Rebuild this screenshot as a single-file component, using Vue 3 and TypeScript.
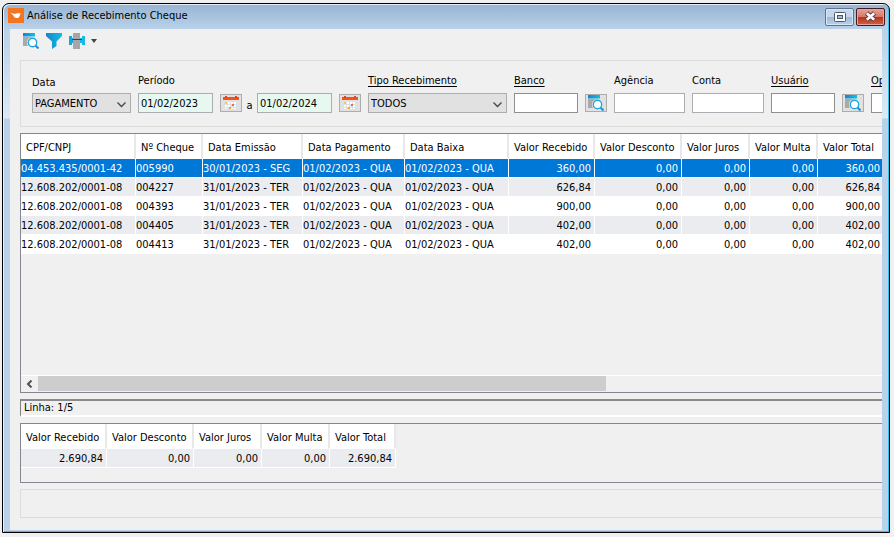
<script setup lang="ts">
import { ref } from 'vue'

interface Column {
  label: string
  width: number
  numeric?: boolean
}

const valueColumns: Column[] = [
  { label: 'Valor Recebido', width: 86, numeric: true },
  { label: 'Valor Desconto', width: 87, numeric: true },
  { label: 'Valor Juros', width: 68, numeric: true },
  { label: 'Valor Multa', width: 68, numeric: true },
  { label: 'Valor Total', width: 66, numeric: true },
]

const columns: Column[] = [
  { label: 'CPF/CNPJ', width: 115 },
  { label: 'Nº Cheque', width: 67 },
  { label: 'Data Emissão', width: 100 },
  { label: 'Data Pagamento', width: 102 },
  { label: 'Data Baixa', width: 104 },
  ...valueColumns,
]

const paid = '01/02/2023 - QUA'
const rows: string[][] = [
  ['04.453.435/0001-42', '005990', '30/01/2023 - SEG', paid, paid, '360,00', '0,00', '0,00', '0,00', '360,00'],
  ['12.608.202/0001-08', '004227', '31/01/2023 - TER', paid, paid, '626,84', '0,00', '0,00', '0,00', '626,84'],
  ['12.608.202/0001-08', '004393', '31/01/2023 - TER', paid, paid, '900,00', '0,00', '0,00', '0,00', '900,00'],
  ['12.608.202/0001-08', '004405', '31/01/2023 - TER', paid, paid, '402,00', '0,00', '0,00', '0,00', '402,00'],
  ['12.608.202/0001-08', '004413', '31/01/2023 - TER', paid, paid, '402,00', '0,00', '0,00', '0,00', '402,00'],
]
const totals = ['2.690,84', '0,00', '0,00', '0,00', '2.690,84']

const selected = ref(0)
const dateKind = ref('PAGAMENTO')
const receiptKind = ref('TODOS')
const from = ref('01/02/2023')
const to = ref('01/02/2024')
const bank = ref('')
const agency = ref('')
const account = ref('')
const user = ref('')
const operator = ref('')
</script>

<template>
  <div class="desktop">
    <svg class="defs" width="0" height="0" aria-hidden="true">
      <defs>
        <linearGradient id="cyan" x1="0" x2="1" y1="0" y2="0">
          <stop offset="0" stop-color="#1783cf" />
          <stop offset="1" stop-color="#12bfe2" />
        </linearGradient>
        <symbol id="search" viewBox="0 0 16 16">
          <path d="M0 4h10v9H0z" fill="#a9a9a9" />
          <path d="M0 0h12v3.500H0z" fill="url(#cyan)" />
          <circle cx="9.5" cy="9.5" r="5.6" fill="#f0f0f0" />
          <circle cx="9.5" cy="9.5" r="4.2" fill="#fff" stroke="#1ba5dc" stroke-width="1.4" />
          <path d="M12.700 12.700l2.800 2.800" stroke="#1593d6" stroke-width="2" />
        </symbol>
        <symbol id="calendar" viewBox="0 0 16 15">
          <path d="M0 1h16v13H0z" fill="#dde1e6" />
          <path d="M0 1h16v3H0z" fill="#fc4f16" />
          <path d="M2 0h2v2H2zM12 0h2v2h-2z" fill="#c94d29" />
          <path d="M5 6h2v2H5zM8 6h2v2H8zM11 6h2v2h-2zM2 9h2v2H2zM5 9h2v2H5zM11 9h2v2h-2zM2 12h2v1H2zM8 12h2v1H8zM11 12h2v1h-2z" fill="#fff" />
          <path d="M2 6h2v2H2z" fill="#f5cf3a" />
          <path d="M9 8h2v2H9z" fill="#f36b3c" />
          <path d="M6 11h2v2H6z" fill="#f5a03a" />
        </symbol>
      </defs>
    </svg>

    <main class="window">
      <header class="titlebar">
        <svg class="app-icon" width="16" height="15" viewBox="0 0 16 15" aria-hidden="true">
          <path d="M0 0h16v15H0z" fill="#f4741f" />
          <path d="M2.500 4.800l4 1.200c1.800-1 4-1 6.500-.4-.7.400-1 .9-1.200 1.800-.5 2-1.500 2.700-3 2.700-2.300 0-3-1.400-3.600-2.800z" fill="#fff" />
        </svg>
        <h1>Análise de Recebimento Cheque</h1>
        <button class="caption" type="button" aria-label="Restaurar">
          <svg width="12" height="10" viewBox="0 0 12 10" aria-hidden="true">
            <rect x=".5" y=".5" width="11" height="9" rx="1" fill="#fff" stroke="#4c5969" />
            <rect x="3.500" y="3.500" width="5" height="3" fill="#9dbce0" stroke="#4c5969" />
          </svg>
        </button>
        <button class="caption close" type="button" aria-label="Fechar">
          <svg width="13" height="11" viewBox="0 0 13 11" aria-hidden="true">
            <path d="M2.500 2l8 7M10.500 2l-8 7" stroke="#5b3b42" stroke-width="4.500" />
            <path d="M2.800 2.200l7.400 6.600M10.200 2.200l-7.400 6.600" stroke="#fff" stroke-width="2.600" />
          </svg>
        </button>
      </header>

      <div class="client">
        <div class="toolbar">
          <button type="button" aria-label="Pesquisar">
            <svg width="16" height="16"><use href="#search" /></svg>
          </button>
          <button type="button" aria-label="Filtrar">
            <svg width="16" height="16" viewBox="0 0 16 16" aria-hidden="true">
              <path d="M0 0h16v3l-5.500 5.500V13L6 16V8.500L0 3z" fill="url(#cyan)" />
            </svg>
          </button>
          <button class="print" type="button" aria-label="Imprimir">
            <svg width="16" height="16" viewBox="0 0 16 16" aria-hidden="true">
              <path d="M4 0h7v16H4z" fill="#a6a6a6" />
              <path d="M0 3h3v2h1v5H3v2H0z" fill="#18a5dc" />
              <path d="M16 3h-3v2h-2v5h2v2h3z" fill="#18b9e4" />
              <path d="M3 6.500h10" stroke="#35434d" />
            </svg>
            <svg width="6" height="4" viewBox="0 0 6 4" aria-hidden="true">
              <path d="M0 0h6L3 4z" fill="#444" />
            </svg>
          </button>
        </div>

        <form class="filters" @submit.prevent>
          <div class="field kind">
            <label for="kind">Data</label>
            <span class="select">
              <select id="kind" v-model="dateKind"><option>PAGAMENTO</option></select>
              <svg width="9" height="6" viewBox="0 0 9 6" aria-hidden="true"><path d="M.5 .5l4 4 4-4" /></svg>
            </span>
          </div>
          <div class="field">
            <label for="from">Período</label>
            <div class="range">
              <input id="from" v-model="from" class="date" type="text" />
              <button type="button" aria-label="Data inicial"><svg width="16" height="15"><use href="#calendar" /></svg></button>
              <label class="until" for="to">a</label>
              <input id="to" v-model="to" class="date" type="text" />
              <button type="button" aria-label="Data final"><svg width="16" height="15"><use href="#calendar" /></svg></button>
            </div>
          </div>
          <div class="field receipt">
            <label class="link" for="receipt">Tipo Recebimento</label>
            <span class="select">
              <select id="receipt" v-model="receiptKind"><option>TODOS</option></select>
              <svg width="9" height="6" viewBox="0 0 9 6" aria-hidden="true"><path d="M.5 .5l4 4 4-4" /></svg>
            </span>
          </div>
          <div class="field code">
            <label class="link" for="bank">Banco</label>
            <input id="bank" v-model="bank" class="dark" type="text" />
          </div>
          <button type="button" aria-label="Pesquisar banco"><svg width="16" height="16"><use href="#search" /></svg></button>
          <div class="field agency">
            <label for="agency">Agência</label>
            <input id="agency" v-model="agency" type="text" />
          </div>
          <div class="field account">
            <label for="account">Conta</label>
            <input id="account" v-model="account" type="text" />
          </div>
          <div class="field code">
            <label class="link" for="user">Usuário</label>
            <input id="user" v-model="user" class="dark" type="text" />
          </div>
          <button type="button" aria-label="Pesquisar usuário"><svg width="16" height="16"><use href="#search" /></svg></button>
          <div class="field code">
            <label class="link" for="operator">Operador</label>
            <input id="operator" v-model="operator" class="dark" type="text" />
          </div>
        </form>

        <section class="panel grid">
          <div class="view">
            <table>
              <colgroup><col v-for="c in columns" :key="c.label" :style="{ width: c.width + 'px' }" /></colgroup>
              <thead>
                <tr><th v-for="c in columns" :key="c.label" scope="col">{{ c.label }}</th></tr>
              </thead>
              <tbody>
                <tr v-for="(row, r) in rows" :key="r" :class="{ selected: r === selected }" @click="selected = r">
                  <td v-for="(cell, i) in row" :key="i" :class="{ numeric: columns[i].numeric }">{{ cell }}</td>
                </tr>
              </tbody>
            </table>
          </div>
          <div class="scrollbar">
            <button type="button" aria-label="Rolar para a esquerda">
              <svg width="7" height="8" viewBox="0 0 7 8" aria-hidden="true"><path d="M5.500 .5L2 4l3.500 3.500" fill="none" stroke="#505050" stroke-width="2" /></svg>
            </button>
            <div class="thumb"></div>
          </div>
        </section>

        <p class="status">Linha: {{ selected + 1 }}/{{ rows.length }}</p>

        <section class="panel totals">
          <table>
            <colgroup><col v-for="c in valueColumns" :key="c.label" :style="{ width: c.width + 'px' }" /></colgroup>
            <thead>
              <tr><th v-for="c in valueColumns" :key="c.label" scope="col">{{ c.label }}</th></tr>
            </thead>
            <tbody>
              <tr class="shaded"><td v-for="(t, i) in totals" :key="i" class="numeric">{{ t }}</td></tr>
            </tbody>
          </table>
        </section>

        <footer class="footer"></footer>
      </div>
    </main>
  </div>
</template>

<style>
body {
  background: #f0f0f0;
}
</style>

<style scoped>
* {
  box-sizing: border-box;
}

.desktop {
  display: flex;
  min-height: 100vh;
  padding: 3px 4px 4px 2px;
  font-family: "DejaVu Sans Condensed", "Noto Sans", sans-serif;
  font-size: 11px;
  line-height: 14px;
  color: #000;
}

.defs {
  position: absolute;
}

.window {
  flex: 1;
  min-width: 0;
  display: flex;
  flex-direction: column;
  padding: 0 7px 2px;
  border: 1px solid #000;
  border-radius: 7px 7px 0 0;
  background: linear-gradient(#98b4d2 0, #b9d1ea 25px, #dce9f6 114px, #b9d1ea 115px);
  box-shadow: inset 1px 1px #e6f0fa, inset -1px -1px #35c5ea;
}

.titlebar {
  display: flex;
  align-items: center;
  height: 25px;
  margin: 0 -3px 0 -2px;
}

.app-icon {
  margin: 0 3px 2px 0;
}

h1 {
  flex: 1;
  margin: 0;
  padding-bottom: 2px;
  font-size: 11px;
  font-weight: 400;
  white-space: nowrap;
}

button {
  display: flex;
  align-items: center;
  justify-content: center;
  flex: none;
  padding: 0;
  border: 0;
  background: none;
}

.caption {
  width: 29px;
  height: 18px;
  margin-left: 2px;
  border: 1px solid #5f7491;
  border-radius: 2px;
  background: linear-gradient(#c4d7ec 0 48%, #9db8d6 50%, #b8d2ec);
  box-shadow: inset 0 0 0 1px #d9e7f5;
}

.close {
  border-color: #431b25;
  background: linear-gradient(#e5a398, #d67a69 48%, #b8311a 50%, #cf6246);
  box-shadow: inset 0 0 0 1px #e6a59a;
}

.client {
  flex: 1;
  display: flex;
  flex-direction: column;
  gap: 6px;
  min-width: 0;
  padding: 0 0 12px 10px;
  overflow: hidden;
  background: #f0f0f0;
}

.toolbar {
  display: flex;
  align-items: center;
  gap: 7px;
  height: 25px;
  padding: 0 3px 2px;
}

.print {
  gap: 6px;
}

.filters {
  display: flex;
  align-items: flex-end;
  gap: 7px;
  height: 67px;
  padding: 0 0 13px 11px;
  border: 1px solid #dcdcdc;
  border-right: 0;
  overflow: hidden;
}

.field {
  display: flex;
  flex: none;
  flex-direction: column;
  gap: 5px;
  white-space: nowrap;
}

.kind {
  width: 99px;
  gap: 3px;
}

.receipt {
  width: 139px;
}

.code {
  width: 64px;
}

.agency {
  width: 71px;
}

.account {
  width: 72px;
}

.link {
  text-decoration: underline;
  text-underline-offset: 2px;
}

.range {
  display: flex;
  align-items: flex-end;
}

.range button {
  margin-left: 7px;
}

.range .until {
  width: 15px;
  text-align: center;
}

.filters button {
  width: 22px;
  height: 18px;
  margin-bottom: 1px;
  border: 1px solid #adadad;
  background: #e1e1e1;
}

input {
  width: 100%;
  height: 20px;
  padding: 0 2px;
  border: 1px solid #abadb3;
  border-radius: 0;
  background: #fff;
  color: #000;
  font: inherit;
}

.dark {
  border-color: #8f8f92;
}

.date {
  width: 75px;
  background: #e6f8f0;
}

.select {
  display: grid;
  align-items: center;
}

.select select,
.select svg {
  grid-area: 1 / 1;
}

.select svg {
  justify-self: end;
  margin: 3px 5px 0 0;
  pointer-events: none;
  fill: none;
  stroke: #444;
  stroke-width: 1.3;
}

select {
  appearance: none;
  width: 100%;
  height: 20px;
  padding: 1px 2px 0;
  border: 1px solid #adadad;
  border-radius: 0;
  background: #e1e1e1;
  color: #000;
  font: inherit;
}

.panel {
  border: 1px solid #828790;
  border-right: 0;
}

.grid {
  flex: 1;
  display: flex;
  flex-direction: column;
}

.view {
  flex: 1;
  overflow: hidden;
}

table {
  width: 0;
  table-layout: fixed;
  border-collapse: separate;
  border-spacing: 0;
  white-space: nowrap;
}

th {
  height: 25px;
  padding: 3px 0 0 5px;
  border-right: 2px solid #e8e8e8;
  border-bottom: 1px solid #fff;
  background: #fff;
  font-weight: 400;
  text-align: left;
}

td {
  height: 19px;
  padding: 2px 0 0;
  border-right: 1px solid #fff;
  border-bottom: 1px solid #fff;
  background: #fff;
}

tbody tr:nth-child(even) td,
.shaded td {
  background: #ebecf0;
}

.selected td {
  background: #0078d7;
  color: #fff;
}

.numeric {
  padding-right: 3px;
  text-align: right;
}

.scrollbar {
  display: flex;
  height: 17px;
  padding-bottom: 1px;
  border-top: 1px solid #fff;
}

.scrollbar button {
  width: 17px;
}

.thumb {
  width: 66%;
  background: #cdcdcd;
}

.status {
  height: 18px;
  margin: 0;
  padding: 0 3px;
  border-top: 2px solid #8a8a8a;
  border-left: 1px solid #808080;
  border-bottom: 2px solid #fff;
}

.totals {
  height: 60px;
  overflow: hidden;
}

.footer {
  height: 29px;
  border: 1px solid #dcdcdc;
  border-right: 0;
}
</style>
